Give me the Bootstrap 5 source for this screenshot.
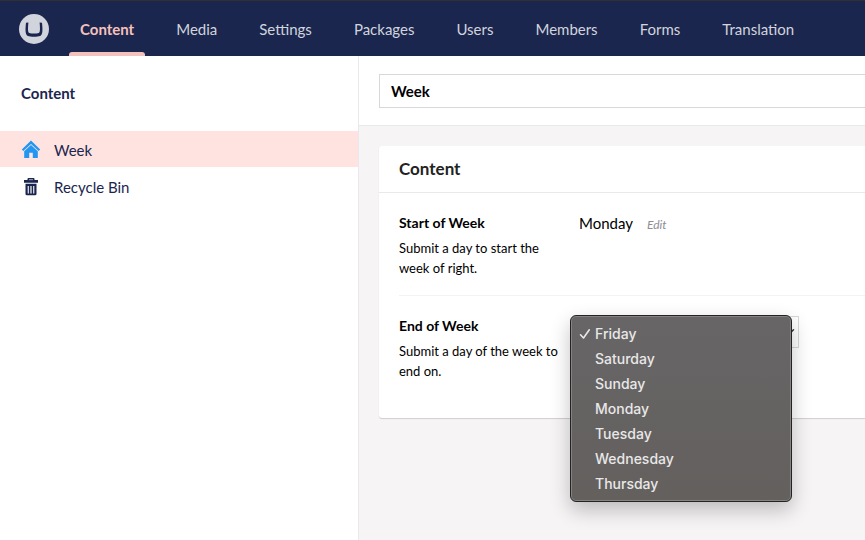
<!DOCTYPE html>
<html lang="en">
<head>
<meta charset="utf-8">
<meta name="viewport" content="width=device-width, initial-scale=1">
<title>Content - Week</title>
<link href="https://cdn.jsdelivr.net/npm/bootstrap@5.3.0/dist/css/bootstrap.min.css" rel="stylesheet">
<style>
  body { font-family: Lato, sans-serif; font-size: 15px; line-height: 20px; color: #000; background: #fff; }
  .app-header { background: #1b264f; border-top: 1px solid #303033; height: 56px; padding-left: 19px; }
  .app-header .logo { width: 30px; height: 30px; margin-right: 20px; }
  .sections { gap: 20px; }
  .sections .nav-link { color: #d1d4dc; padding: 4px 11px 0; border-bottom: 4px solid transparent; }
  .sections .nav-item { position: relative; }
  .sections .nav-link.active { color: #f5c1bc; font-weight: 700; }
  .sections .nav-link.active::after { content: ""; position: absolute; left: 0; right: 0; bottom: 0; height: 4px; background: #f5c1bc; border-radius: 3px 3px 0 0; }
  .tree { width: 359px; border-right: 1px solid #e9e9eb; color: #1b264f; }
  .tree h2 { font-size: 15px; line-height: 20px; font-weight: 700; padding: 27px 21px 28px; }
  .tree-item { color: #1b264f; height: 36px; padding: 2px 21px 0; gap: 13px; margin-bottom: 1px; text-decoration: none; }
  .tree-item.active { background: #ffe3e0; }
  .tree-item svg { width: 20px; height: 20px; margin-top: -1px; }
  .editor { background: #f6f4f5; min-width: 0; }
  .editor-head { padding: 18px 0 17px 20px; border-bottom: 1px solid #e9e9eb; background: #fff; }
  .name-input { border: 1px solid #d8d7d9; border-right: 0; border-radius: 0; height: 34px; padding: 0 11px; font-size: 15px; font-weight: 700; color: #000; }
  .editor-body { padding: 20px 0 20px 20px; }
  .panel { background: #fff; border-radius: 3px 0 0 3px; box-shadow: 0 1px 1px rgba(0,0,0,.16); }
  .panel h3 { font-size: 17px; line-height: 22px; font-weight: 700; color: #222; padding: 12px 20px; height: 47px; border-bottom: 1px solid #e9e9eb; }
  .field { margin-left: 20px; padding: 20px 0 17px; }
  .field + .field { border-top: 1px solid #f3f3f5; padding-bottom: 37px; }
  .field-label { width: 180px; padding-right: 20px; }
  .field-label label, .field-label .title { font-size: 14px; font-weight: 700; display: block; margin-bottom: 5px; }
  .field-label p { font-size: 13px; }
  .edit { font-size: 12px; color: #8e8e92; margin-left: 14px; }
  .day-select { width: 220px; height: 32px; border: 1px solid #d8d7d9; border-radius: 0; padding: 0 24px 0 8px; font-size: 15px; background-position: right 1px center; }
  .day-menu { position: absolute; left: -9px; top: -1px; width: 222px; padding: 5px; border: 1px solid #232323; border-radius: 6px; background: linear-gradient(#676566, #63605e); box-shadow: inset 0 0 0 1px #858384, 0 8px 20px rgba(0,0,0,.24); z-index: 2; font-family: Inter, sans-serif; }
  .day-menu button { display: flex; align-items: center; width: 100%; height: 25px; padding: 0 4px 0 3px; border: 0; background: none; color: #e9e8e8; font-size: 14px; font-weight: 500; }
  .day-menu .tick { width: 16px; height: 12px; flex: none; }
  .day-menu .tick svg { display: block; }
</style>
</head>
<body class="d-flex flex-column min-vh-100">
<header class="app-header d-flex align-items-center">
  <svg class="logo flex-shrink-0" viewBox="0 0 30 30" role="img" aria-label="Home"><circle cx="15" cy="15" r="15" fill="#d1d4dc"/><path d="M7 8.700 C6.200 16 6.200 20.800 9 22 C11 22.900 19 22.900 21 22 C23.800 20.800 23.800 16 23 8.700 L20.600 8.500 C21.200 15 21.200 18.400 19.600 19 C17.500 19.700 12.500 19.700 10.400 19 C8.800 18.400 8.800 15 9.400 8.500Z" fill="#1b264f"/></svg>
  <nav class="h-100">
    <ul class="sections nav flex-nowrap h-100">
      <li class="nav-item"><a class="nav-link active h-100 d-flex align-items-center" aria-current="page" href="#">Content</a></li>
      <li class="nav-item"><a class="nav-link h-100 d-flex align-items-center" href="#">Media</a></li>
      <li class="nav-item"><a class="nav-link h-100 d-flex align-items-center" href="#">Settings</a></li>
      <li class="nav-item"><a class="nav-link h-100 d-flex align-items-center" href="#">Packages</a></li>
      <li class="nav-item"><a class="nav-link h-100 d-flex align-items-center" href="#">Users</a></li>
      <li class="nav-item"><a class="nav-link h-100 d-flex align-items-center" href="#">Members</a></li>
      <li class="nav-item"><a class="nav-link h-100 d-flex align-items-center" href="#">Forms</a></li>
      <li class="nav-item"><a class="nav-link h-100 d-flex align-items-center" href="#">Translation</a></li>
    </ul>
  </nav>
</header>
<div class="d-flex flex-grow-1">
  <aside class="tree flex-shrink-0">
    <h2 class="mb-0">Content</h2>
    <a class="tree-item active d-flex align-items-center" href="#">
      <svg viewBox="0 0 20 20" aria-hidden="true"><path d="M10 .6 L.8 9.400 L2.300 11 L10 3.900 L17.700 11 L19.200 9.400Z M10 4.900 L3.200 11.200 V18 H8.200 V12.800 H11.800 V18 H16.800 V11.200Z" fill="#2196f3"/></svg>
      <span>Week</span>
    </a>
    <a class="tree-item d-flex align-items-center" href="#">
      <svg viewBox="0 0 20 20" aria-hidden="true"><path d="M3 3 H6.500 V2 Q6.500 1 7.500 1 H12.500 Q13.500 1 13.500 2 V3 H17 V5.800 H3Z M4.500 6.800 H15.500 V17 Q15.500 18.300 14 18.300 H6 Q4.500 18.300 4.500 17Z M6.700 9 V16.500 H7.800 V9Z M9.400 9 V16.500 H10.600 V9Z M12.200 9 V16.500 H13.300 V9Z" fill="#1b264f" fill-rule="evenodd"/><path d="M8 2 H12 V3.200 H8Z" fill="#8d93a7"/></svg>
      <span>Recycle Bin</span>
    </a>
  </aside>
  <main class="editor flex-grow-1">
    <div class="editor-head">
      <input class="name-input form-control" type="text" value="Week" aria-label="Name">
    </div>
    <div class="editor-body">
      <section class="panel">
        <h3 class="mb-0">Content</h3>
        <div class="field d-flex">
          <div class="field-label flex-shrink-0">
            <span class="title">Start of Week</span>
            <p class="mb-0">Submit a day to start the week of right.</p>
          </div>
          <div><span>Monday</span><a class="edit fst-italic text-decoration-none" href="#">Edit</a></div>
        </div>
        <div class="field d-flex">
          <div class="field-label flex-shrink-0">
            <label for="end-day">End of Week</label>
            <p class="mb-0">Submit a day of the week to end on.</p>
          </div>
          <div class="position-relative">
            <select id="end-day" class="day-select form-select">
              <option selected>Friday</option><option>Saturday</option><option>Sunday</option><option>Monday</option><option>Tuesday</option><option>Wednesday</option><option>Thursday</option>
            </select>
            <div class="day-menu" role="listbox" aria-label="End of Week">
              <button type="button" role="option" aria-selected="true"><span class="tick"><svg width="12" height="12" viewBox="0 0 12 12" aria-hidden="true"><path d="M1.500 6.800 L4.500 10 L10.300 1.800" fill="none" stroke="#e9e8e8" stroke-width="1.600" stroke-linecap="round" stroke-linejoin="round"/></svg></span>Friday</button>
              <button type="button" role="option"><span class="tick"></span>Saturday</button>
              <button type="button" role="option"><span class="tick"></span>Sunday</button>
              <button type="button" role="option"><span class="tick"></span>Monday</button>
              <button type="button" role="option"><span class="tick"></span>Tuesday</button>
              <button type="button" role="option"><span class="tick"></span>Wednesday</button>
              <button type="button" role="option"><span class="tick"></span>Thursday</button>
            </div>
          </div>
        </div>
      </section>
    </div>
  </main>
</div>
<script src="https://cdn.jsdelivr.net/npm/bootstrap@5.3.0/dist/js/bootstrap.bundle.min.js"></script>
</body>
</html>
